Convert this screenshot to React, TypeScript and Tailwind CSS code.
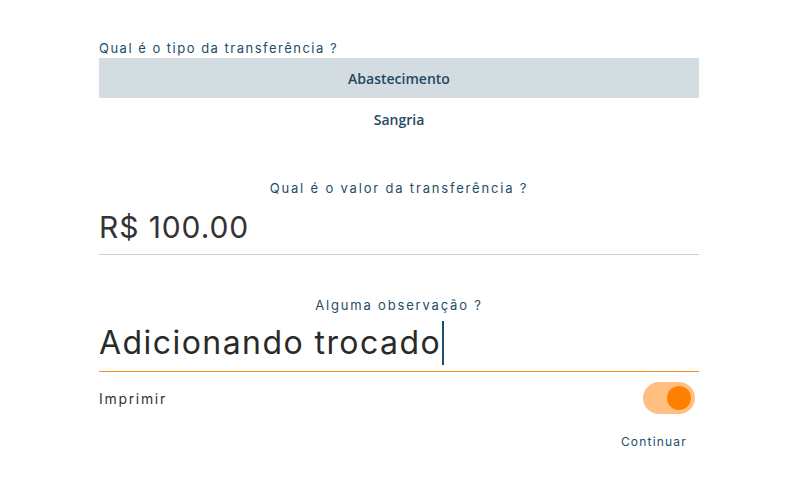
export default function App() {
  return (
    <div className="min-h-screen bg-white">
      <div className="ml-[99px] w-[600px] pt-[38px] font-['Inter',sans-serif]">
        <p className="text-[13px] leading-[20px] tracking-[0.115em] text-[#1e4d68]">Qual é o tipo da transferência ?</p>
        <div className="flex flex-col font-['Open_Sans',sans-serif]">
          <button className="h-[40px] bg-[#d3dce1] text-[14px] font-semibold text-[#234a60]">Abastecimento</button>
          <button className="h-[42px] text-[14px] font-semibold text-[#234a60]">Sangria</button>
        </div>
        <p className="mt-[38px] text-center text-[13px] leading-[20px] tracking-[0.14em] text-[#1e4d68]">Qual é o valor da transferência ?</p>
        <div className="flex h-[57px] items-center border-b border-[#c5d0d6] pt-[2px] text-[30px] tracking-[0.03em] text-[#333333]">R$ 100.00</div>
        <p className="mt-[40px] text-center text-[13px] leading-[20px] tracking-[0.14em] text-[#1e4d68]">Alguma observação ?</p>
        <div className="flex h-[57px] items-center border-b border-[#ff8c1a] text-[32px] tracking-[0.045em] text-[#2a2a2a]">
          Adicionando trocado<span className="ml-[1px] inline-block h-[44px] w-[2px] bg-[#1e4d68]" />
        </div>
        <div className="mt-[10px] flex items-center justify-between">
          <span className="text-[14px] tracking-[0.12em] text-[#333333]">Imprimir</span>
          <div className="mr-[4px] flex h-[32px] w-[52px] items-center justify-end rounded-full bg-[#ffbf80] pr-[4px]">
            <div className="h-[24px] w-[24px] rounded-full bg-[#ff8000]" />
          </div>
        </div>
        <div className="mt-[19px] flex justify-end pr-[12px]">
          <span className="text-[12px] leading-[18px] tracking-[0.1em] text-[#1e4d68]">Continuar</span>
        </div>
      </div>
    </div>
  );
}
